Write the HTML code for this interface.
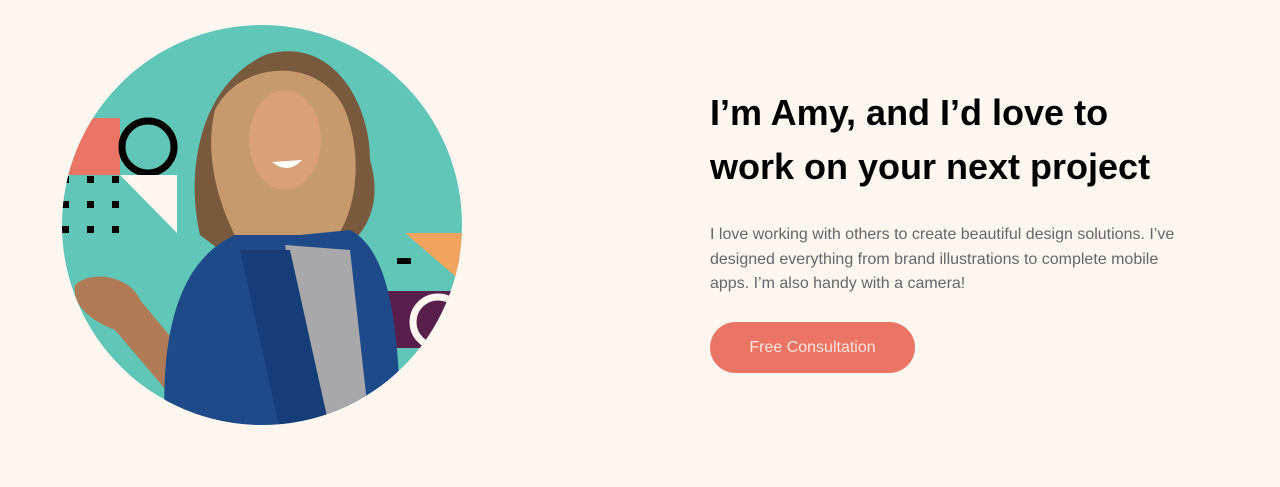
<!DOCTYPE html>
<html><head><meta charset="utf-8"><style>
body{margin:0;background:#fff6f0;width:1280px;height:487px;overflow:hidden;font-family:"Liberation Sans",sans-serif;position:relative}
svg{position:absolute;left:0;top:0}
h1{position:absolute;left:710px;top:86px;margin:0;font-size:36px;line-height:54px;font-weight:bold;color:#000;width:460px}
p{position:absolute;left:710px;top:223px;margin:0;font-size:16px;line-height:24.5px;color:#666;width:490px}
.btn{position:absolute;left:710px;top:322px;width:205px;height:51px;border-radius:26px;background:#eb7565;color:#fde3dc;font-size:16px;line-height:51px;text-align:center}
</style></head><body>
<svg width="1280" height="487">
<defs><clipPath id="c"><circle cx="262" cy="225" r="200"/></clipPath></defs>
<g clip-path="url(#c)">
<rect x="0" y="0" width="600" height="500" fill="#60c6b8"/>
<rect x="62" y="118" width="58" height="57" fill="#eb7565"/>
<circle cx="148" cy="147" r="26" fill="none" stroke="#000" stroke-width="7"/>
<polygon points="120,175 177,175 177,233" fill="#fff6f0"/>
<g fill="#000">
<rect x="62" y="176" width="7" height="7"/><rect x="87" y="176" width="7" height="7"/><rect x="112" y="176" width="7" height="7"/>
<rect x="62" y="201" width="7" height="7"/><rect x="87" y="201" width="7" height="7"/><rect x="112" y="201" width="7" height="7"/>
<rect x="62" y="226" width="7" height="7"/><rect x="87" y="226" width="7" height="7"/><rect x="112" y="226" width="7" height="7"/>
<rect x="397" y="258" width="14" height="6"/><rect x="447" y="258" width="14" height="6"/>
</g>
<polygon points="405,233 462,233 462,282" fill="#f2a35e"/>
<rect x="385" y="291" width="80" height="57" fill="#5a1e4c"/>
<circle cx="438" cy="322" r="25" fill="none" stroke="#fff6f0" stroke-width="7"/>
<path d="M200,235 C185,170 200,85 265,55 C330,35 370,100 370,160 C385,210 360,240 340,250 L220,250 Z" fill="#7a5a3e"/>
<path d="M215,110 C240,60 320,55 345,110 C365,160 355,220 330,245 L240,245 C215,200 205,150 215,110Z" fill="#c69a6c"/>
<ellipse cx="285" cy="140" rx="36" ry="50" fill="#d9a07a"/>
<path d="M272,162 Q288,175 302,160 Z" fill="#fff"/>
<path d="M75,285 C90,270 130,275 140,300 L240,420 L200,430 L115,330 C90,320 72,305 75,285Z" fill="#b07a55"/>
<path d="M165,430 C160,330 180,260 235,235 L300,235 L350,230 C390,250 400,330 400,430Z" fill="#1f4a8a"/>
<path d="M285,245 L350,250 L370,430 L320,430 Z" fill="#a8a8aa"/>
<path d="M240,250 L290,250 L330,430 L280,430Z" fill="#173d78"/>
</g>
</svg>
<h1>I’m Amy, and I’d love to work on your next project</h1>
<p>I love working with others to create beautiful design solutions. I’ve designed everything from brand illustrations to complete mobile apps. I’m also handy with a camera!</p>
<div class="btn">Free Consultation</div>
</body></html>
